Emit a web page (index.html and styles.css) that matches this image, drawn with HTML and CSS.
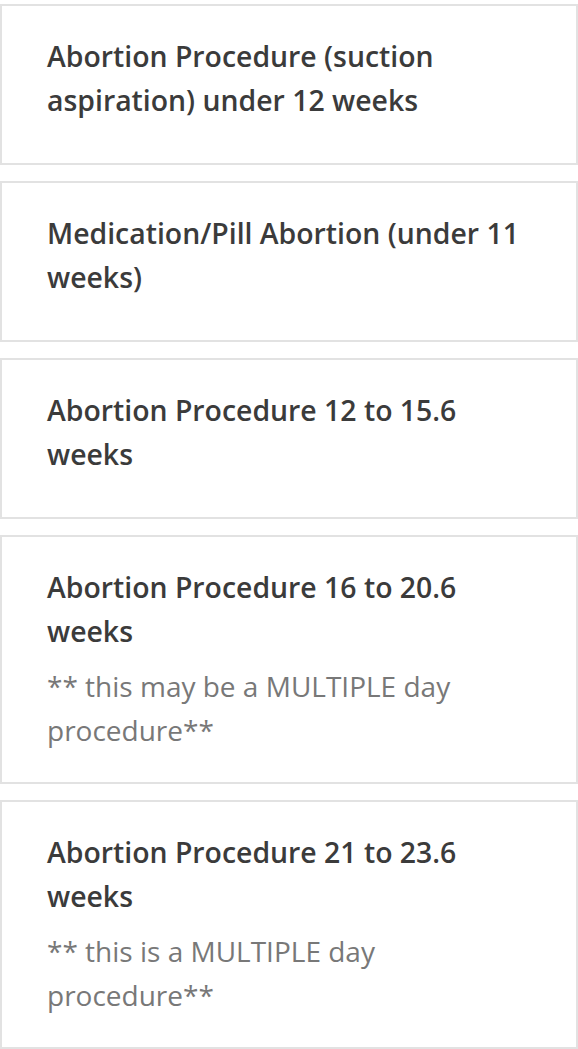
FILE: index.html
```html
<!DOCTYPE html>
<html lang="en">
<head>
<meta charset="utf-8">
<title>Procedures</title>
<link rel="stylesheet" href="styles.css">
</head>
<body>
<main class="list">
  <div class="card">
    <div class="title">Abortion Procedure (suction aspiration) under 12 weeks</div>
  </div>
  <div class="card">
    <div class="title">Medication/Pill Abortion (under 11 weeks)</div>
  </div>
  <div class="card">
    <div class="title">Abortion Procedure 12 to 15.6 weeks</div>
  </div>
  <div class="card">
    <div class="title">Abortion Procedure 16 to 20.6 weeks</div>
    <div class="note">** this may be a MULTIPLE day procedure**</div>
  </div>
  <div class="card">
    <div class="title">Abortion Procedure 21 to 23.6 weeks</div>
    <div class="note">** this is a MULTIPLE day procedure**</div>
  </div>
</main>
</body>
</html>
```
FILE: styles.css
```css
html, body {
  margin: 0;
  padding: 0;
  background: #ffffff;
}
.list {
  display: flex;
  flex-direction: column;
  gap: 16px;
  padding-top: 4px;
}
.card {
  display: flex;
  flex-direction: column;
  border: 2px solid #e2e2e2;
  padding: 28px 45px 30px;
  font-family: "Open Sans", "Lato", sans-serif;
  font-variant-ligatures: none;
}
.title {
  font-size: 28.4px;
  line-height: 44px;
  font-weight: 600;
  color: #3b3b3b;
  margin-bottom: 11px;
}
.note {
  font-size: 28px;
  line-height: 44px;
  font-weight: 400;
  color: #787878;
}
```
